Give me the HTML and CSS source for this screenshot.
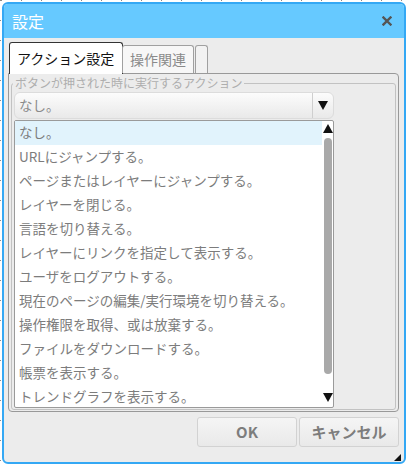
FILE: index.html
```html
<!DOCTYPE html>
<html lang="ja">
<head>
<meta charset="utf-8">
<title>設定</title>
<link rel="stylesheet" href="styles.css">
</head>
<body>
<div class="dialog">
  <div class="titlebar">
    <span class="title">設定</span>
    <svg class="close" width="10" height="10" viewBox="0 0 10 10"><path d="M1.5 1.5L8.5 8.5M8.5 1.5L1.5 8.5" stroke="#555" stroke-width="2.4" stroke-linecap="square"/></svg>
  </div>
  <div class="content">
    <div class="tabs">
      <div class="tab active">アクション設定</div>
      <div class="tab">操作関連</div>
      <div class="tab blank"></div>
    </div>
    <div class="panel">
      <fieldset class="group">
        <legend>ボタンが押された時に実行するアクション</legend>
        <div class="select">
          <span class="value">なし。</span>
          <span class="select-btn"><span class="tri-down"></span></span>
        </div>
        <div class="listbox">
          <ul class="options">
            <li class="selected">なし。</li>
            <li>URLにジャンプする。</li>
            <li>ページまたはレイヤーにジャンプする。</li>
            <li>レイヤーを閉じる。</li>
            <li>言語を切り替える。</li>
            <li>レイヤーにリンクを指定して表示する。</li>
            <li>ユーザをログアウトする。</li>
            <li>現在のページの編集/実行環境を切り替える。</li>
            <li>操作権限を取得、或は放棄する。</li>
            <li>ファイルをダウンロードする。</li>
            <li>帳票を表示する。</li>
            <li>トレンドグラフを表示する。</li>
          </ul>
          <div class="scrollbar">
            <span class="tri-up"></span>
            <span class="thumb"></span>
            <span class="tri-down"></span>
          </div>
        </div>
      </fieldset>
    </div>
    <div class="actions">
      <button class="btn">OK</button>
      <button class="btn">キャンセル</button>
    </div>
  </div>
  <span class="grip"></span>
</div>
</body>
</html>
```
FILE: styles.css
```css
* { box-sizing: border-box; }
html { margin: 0; padding: 0; background: #fff; }
body {
  margin: 0;
  width: 408px;
  height: 466px;
  background-color: #fff;
  background-image:
    linear-gradient(to right, #8a8a8a 1px, transparent 1px),
    linear-gradient(to bottom, #8a8a8a 1px, transparent 1px);
  background-size: 20px 1px, 1px 20px;
  background-position: 1px 0, 0 0;
  background-repeat: repeat-x, repeat-y;
  padding: 2px 0 0 2px;
  font-family: "Noto Sans CJK JP", "Noto Sans", sans-serif;
  overflow: hidden;
}
.dialog {
  position: relative;
  width: 404px;
  height: 462px;
  border: 2px solid #34a8f4;
  border-radius: 6px;
  background: #ececec;
  display: flex;
  flex-direction: column;
  overflow: hidden;
}
.titlebar {
  height: 34px;
  background: #66c9ff;
  display: flex;
  align-items: center;
  justify-content: space-between;
  padding: 0 12px 0 8px;
  flex: none;
}
.title {
  color: #fff;
  font-size: 16px;
  line-height: 20px;
  margin-top: -1px;
}
.close { display: block; margin-top: -1px; }
.content {
  padding: 4px 5px 15px 4px;
  display: flex;
  flex-direction: column;
  flex: 1;
}
.tabs {
  display: flex;
  align-items: flex-end;
  height: 31px;
  padding-left: 1px;
  position: relative;
  z-index: 1;
}
.tab {
  height: 28px;
  border: 1px solid #a0a0a0;
  border-bottom: none;
  border-radius: 3px 3px 0 0;
  background: #f7f7f7;
  color: #8a8a8a;
  font-size: 14px;
  line-height: 26px;
  padding: 0 7px;
  margin-left: -1px;
}
.tab.active {
  height: 32px;
  margin-bottom: -1px;
  margin-left: 0;
  border-color: #333;
  background: #fff;
  color: #111;
  width: 114px;
  padding: 1px 0 0 7px;
  line-height: 28px;
  font-size: 14px;
}
.tab.blank {
  width: 13px;
  padding: 0;
  margin-left: 1px;
  background: #f2f2f2;
}
.panel {
  height: 339px;
  border: 1px solid #999;
  border-radius: 0 4px 4px 4px;
  padding: 2px 2px 1px 2px;
}
.group {
  margin: 0;
  height: 100%;
  border: 1px solid #c2c2c2;
  border-radius: 3px;
  padding: 0 1px 1px 2px;
  min-width: 0;
}
.group legend {
  font-size: 12px;
  line-height: 14px;
  color: #aeaeae;
  padding: 0 2px 0 2px;
  margin-left: -1px;
}
.select {
  margin-top: 2px;
  width: 320px;
  height: 27px;
  border: 1px solid #dcdcdc;
  border-radius: 6px;
  background: linear-gradient(#fcfcfc, #e9e9e9);
  display: flex;
  align-items: stretch;
}
.select .value {
  flex: 1;
  font-size: 13.5px;
  line-height: 25px;
  color: #8a8a8a;
  padding-left: 4px;
}
.select-btn {
  width: 21px;
  border-left: 1px solid #cfcfcf;
  display: flex;
  align-items: center;
  justify-content: center;
}
.tri-down {
  display: block;
  width: 0;
  height: 0;
  border-left: 5px solid transparent;
  border-right: 5px solid transparent;
  border-top: 9px solid #111;
}
.tri-up {
  display: block;
  width: 0;
  height: 0;
  border-left: 5px solid transparent;
  border-right: 5px solid transparent;
  border-bottom: 9px solid #111;
}
.listbox {
  margin-top: 1px;
  width: 320px;
  height: 288px;
  background: #fff;
  border: 1px solid #9a9a9a;
  border-radius: 2px;
  display: flex;
}
.options {
  list-style: none;
  margin: 0;
  padding: 0;
  flex: 1;
}
.options li {
  height: 24px;
  line-height: 23px;
  padding-left: 4px;
  font-size: 13.5px;
  color: #7c7c7c;
  white-space: nowrap;
}
.options li.selected { background: #e1f3fc; }
.scrollbar {
  width: 11px;
  display: flex;
  flex-direction: column;
  align-items: center;
  padding: 3px 0 5px;
}
.scrollbar .thumb {
  width: 8px;
  flex: 1;
  margin: 5px 0 19px;
  background: #a9a9a9;
  border-radius: 4px;
}
.actions {
  margin-top: 5px;
  display: flex;
  justify-content: flex-end;
  gap: 2px;
}
.btn {
  width: 100px;
  height: 30px;
  border: 1px solid #d2d2d2;
  border-radius: 3px;
  background: linear-gradient(#f5f5f5, #e9e9e9);
  color: #7d7d7d;
  font-family: "Noto Sans CJK JP", "Noto Sans", sans-serif;
  font-weight: bold;
  font-size: 15px;
  line-height: 26px;
  padding: 0;
}
.grip {
  position: absolute;
  right: 3px;
  bottom: 1px;
  width: 0;
  height: 0;
  border-left: 7px solid transparent;
  border-bottom: 7px solid #111;
}
```
